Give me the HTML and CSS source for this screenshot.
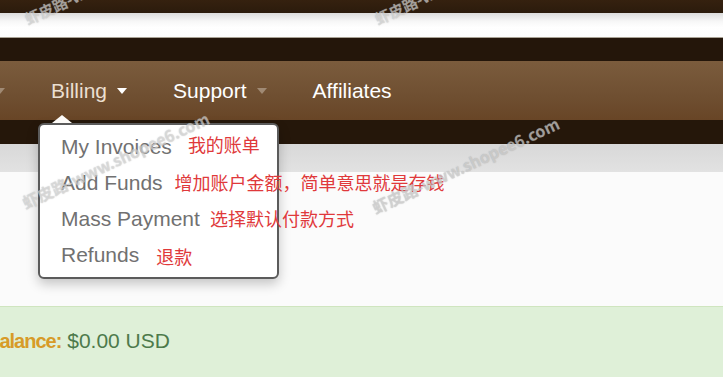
FILE: index.html
```html
<!DOCTYPE html>
<html lang="zh">
<head>
<meta charset="utf-8">
<title>Billing</title>
<link rel="stylesheet" href="styles.css">
</head>
<body>
<div class="page">
  <div class="topbar"></div>
  <div class="searchbar"></div>
  <div class="darkbar"></div>
  <nav class="nav">
    <span class="caret caret-dim caret-prev"></span>
    <a class="nav-item nav-active">Billing <span class="caret caret-white"></span></a>
    <a class="nav-item">Support <span class="caret caret-dim"></span></a>
    <a class="nav-item">Affiliates</a>
  </nav>
  <div class="darkbar darkbar-low"></div>
  <div class="greybar"></div>
  <main class="main"></main>
  <div class="alert">
    <span class="alert-label">Balance:</span> <span class="alert-value">$0.00 USD</span>
  </div>

  <div class="dropdown">
    <div class="dd-item"><span>My Invoices</span><span class="note note-1">我的账单</span></div>
    <div class="dd-item"><span>Add Funds</span><span class="note note-2">增加账户金额，简单意思就是存钱</span></div>
    <div class="dd-item"><span>Mass Payment</span><span class="note note-3">选择默认付款方式</span></div>
    <div class="dd-item"><span>Refunds</span><span class="note note-4">退款</span></div>
  </div>

  <div class="wm wm-1">虾皮路-www</div>
  <div class="wm wm-2">虾皮路-www</div>
  <div class="wm wm-3">虾皮路-www.shopee6.com</div>
  <div class="wm wm-4">虾皮路-www.shopee6.com</div>
</div>
</body>
</html>
```
FILE: styles.css
```css
html, body {
  margin: 0;
  padding: 0;
  width: 723px;
  height: 377px;
  overflow: hidden;
  font-family: "Liberation Sans", Arial, "Noto Sans CJK SC", sans-serif;
}
.page {
  position: relative;
  width: 723px;
  height: 377px;
  overflow: hidden;
  display: flex;
  flex-direction: column;
  background: #fcfcfc;
}
.topbar {
  height: 13px;
  background: linear-gradient(#35210f, #2b1b0c);
}
.searchbar {
  height: 24px;
  background: linear-gradient(#dcdcdc, #f7f7f7 35%, #ffffff 60%, #fdfdfd);
  border-bottom: 1px solid #a9a295;
}
.darkbar {
  height: 23px;
  background: #24160a;
}
.darkbar-low {
  height: 24px;
  background: #25170a;
}
.nav {
  height: 59px;
  background: linear-gradient(#7b5c3d, #6f4f31 60%, #684526);
  display: flex;
  align-items: center;
  gap: 46px;
  font-size: 21px;
}
.nav-item {
  color: #ffffff;
  display: flex;
  align-items: center;
  gap: 10px;
  line-height: 24px;
}
.nav-active {
  color: #ebdfd0;
}
.caret {
  display: inline-block;
  width: 0;
  height: 0;
  border-left: 5.5px solid transparent;
  border-right: 5.5px solid transparent;
  border-top: 6px solid #fff;
  margin-top: 1px;
}
.caret-white { border-top-color: #ffffff; }
.caret-dim { border-top-color: #a08a74; }
.caret-prev { margin-left: -5px; }
.greybar {
  height: 28px;
  background: linear-gradient(#d8d8d8, #e2e2e2);
}
.main {
  height: 134px;
  background: #fbfbfb;
}
.alert {
  flex: 1;
  border-top: 1px solid #cfe5bf;
  background: #dff0d8;
  padding-top: 22px;
  padding-left: 0;
  margin-left: -14px;
  font-size: 21px;
  line-height: 24px;
}
.alert-label {
  color: #d79b28;
  font-weight: bold;
  font-size: 20px;
  letter-spacing: -1px;
}
.alert-value {
  color: #4d7a4b;
}
.dropdown {
  position: absolute;
  left: 38px;
  top: 123px;
  width: 237px;
  padding: 4px 0;
  background: #ffffff;
  border: 2px solid #5b5b5b;
  border-radius: 6px;
  box-shadow: 0 5px 12px rgba(0, 0, 0, 0.22);
}
.dropdown::before {
  content: "";
  position: absolute;
  left: 12px;
  top: -10px;
  border-left: 10px solid transparent;
  border-right: 10px solid transparent;
  border-bottom: 8px solid #fdfbf8;
}
.dd-item {
  display: flex;
  align-items: center;
  height: 36px;
  padding-left: 21px;
  font-size: 21px;
  color: #717171;
  white-space: nowrap;
}
.note {
  font-family: "Noto Sans CJK SC", sans-serif;
  font-size: 18px;
  color: #e0393b;
  line-height: 20px;
}
.note-1 { margin-left: 16px; margin-top: -6px; }
.note-2 { margin-left: 12px; margin-top: -2px; }
.note-3 { margin-left: 10px; margin-top: -2px; }
.note-4 { margin-left: 17px; margin-top: 2px; }
.wm {
  position: absolute;
  font-family: "Noto Sans CJK SC", sans-serif;
  font-size: 15px;
  font-weight: bold;
  color: rgba(235, 235, 235, 0.55);
  text-shadow: 0 0 1px rgba(120, 120, 120, 0.5);
  white-space: nowrap;
  transform-origin: 0 100%;
  transform: rotate(-25deg);
}
.wm-1 { left: 30px; top: 8px; }
.wm-2 { left: 380px; top: 8px; }
.wm-3 { left: 28px; top: 190px; font-size: 16px; }
.wm-4 { left: 378px; top: 195px; font-size: 16px; color: rgba(220, 220, 220, 0.6); }
```
